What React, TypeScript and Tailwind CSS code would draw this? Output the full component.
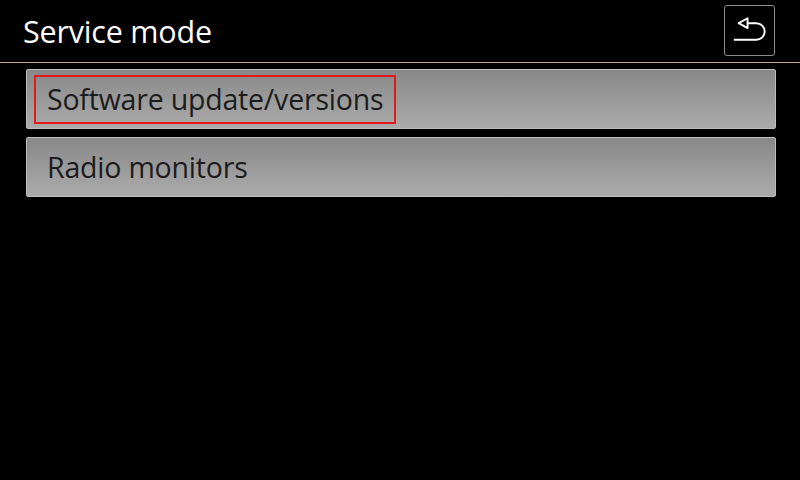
export default function App() {
  const items = ["Software update/versions", "Radio monitors"];

  return (
    <div
      className="w-[800px] h-[480px] bg-black text-white overflow-hidden"
      style={{ fontFamily: '"Open Sans", "DejaVu Sans", sans-serif' }}
    >
      {/* Header */}
      <div className="h-[63px] flex items-center justify-between pl-[23px] pr-[25px] border-b border-[#c7a98e]">
        <h1 className="text-[30.5px] leading-none pt-[1px] tracking-[-0.2px]">Service mode</h1>
        <button className="w-[51px] h-[51px] mb-[1px] rounded-[3px] border border-[#8c8c8c] flex items-center justify-center">
          <svg width="50" height="50" viewBox="0 0 50 50" fill="none">
            <path d="M14 17 L23 12 L23 22 Z" stroke="white" strokeWidth="2" strokeLinejoin="round" />
            <path d="M23 17 H32 A8.5 8.5 0 0 1 32 34 H9" stroke="white" strokeWidth="2" />
          </svg>
        </button>
      </div>

      {/* Menu list */}
      <div className="flex flex-col gap-[8px] pl-[26px] pr-[24px] pt-[6px]">
        {items.map((label, i) => (
          <div
            key={label}
            className="h-[60px] rounded-[2px] border border-[#bcbcbc] bg-gradient-to-b from-[#888888] to-[#ababab] flex items-center px-[7px]"
          >
            <div
              className={
                "h-[49px] flex items-center pl-[11px] pr-[11px] " +
                (i === 0 ? "border-[2.5px] border-[#e3191c]" : "border-[2.5px] border-transparent")
              }
            >
              <span className="text-[28.5px] leading-none text-[#1c1c1c] tracking-[-0.2px]">{label}</span>
            </div>
          </div>
        ))}
      </div>
    </div>
  );
}
